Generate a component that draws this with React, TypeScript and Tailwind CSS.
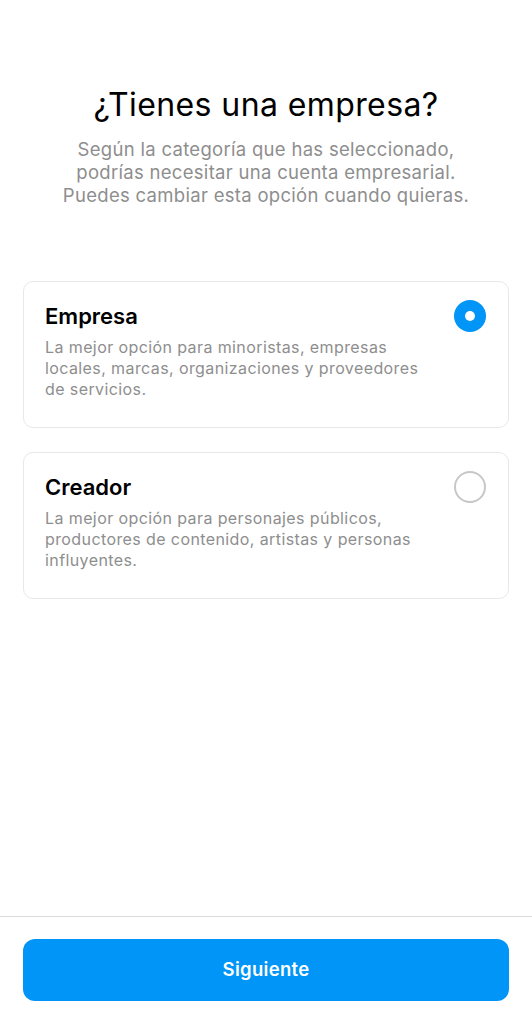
import { useState } from 'react'

interface AccountOption {
    id: string
    title: string
    lines: string[]
}

const options: AccountOption[] = [
    {
        id: 'empresa',
        title: 'Empresa',
        lines: [
            'La mejor opción para minoristas, empresas',
            'locales, marcas, organizaciones y proveedores',
            'de servicios.',
        ],
    },
    {
        id: 'creador',
        title: 'Creador',
        lines: [
            'La mejor opción para personajes públicos,',
            'productores de contenido, artistas y personas',
            'influyentes.',
        ],
    },
]

function Radio({ checked }: { checked: boolean }) {
    if (checked) {
        return (
            <div className="flex h-[32px] w-[32px] items-center justify-center rounded-full bg-[#0095f6]">
                <div className="h-[10px] w-[10px] rounded-full bg-white"></div>
            </div>
        )
    }
    return <div className="h-[32px] w-[32px] rounded-full border-2 border-[#c7c7c7]"></div>
}

function OptionCard({
    option,
    selected,
    onSelect,
}: {
    option: AccountOption
    selected: boolean
    onSelect: () => void
}) {
    return (
        <button
            type="button"
            onClick={onSelect}
            className="flex w-full items-start justify-between rounded-[10px] border border-[#e8e8e8] bg-white pt-[21px] pr-[22px] pb-[27px] pl-[21px] text-left"
        >
            <div>
                <div className="text-[22px] leading-[26px] font-semibold text-[#000]">{option.title}</div>
                <div className="mt-[8px] text-[16px] leading-[21px] tracking-[0.4px] text-[#8e8e8e]">
                    {option.lines.map((line) => (
                        <div key={line}>{line}</div>
                    ))}
                </div>
            </div>
            <div className="-mt-[3px]">
                <Radio checked={selected} />
            </div>
        </button>
    )
}

export default function App() {
    const [selected, setSelected] = useState('empresa')

    return (
        <div
            className="flex h-[1024px] w-full flex-col bg-white"
            style={{ fontFamily: 'Inter, "Liberation Sans", sans-serif' }}
        >
            {/* Content */}
            <div className="flex-1 px-[23px] pt-[86px]">
                <h1 className="text-center text-[32px] leading-[38px] font-normal tracking-[0.4px] text-[#000]">
                    ¿Tienes una empresa?
                </h1>
                <p className="mt-[14px] text-center text-[18.5px] leading-[23px] tracking-[0.3px] text-[#8e8e8e]">
                    Según la categoría que has seleccionado,
                    <br />
                    podrías necesitar una cuenta empresarial.
                    <br />
                    Puedes cambiar esta opción cuando quieras.
                </p>

                <div className="mt-[74px] flex flex-col gap-[24px]">
                    {options.map((option) => (
                        <OptionCard
                            key={option.id}
                            option={option}
                            selected={selected === option.id}
                            onSelect={() => setSelected(option.id)}
                        />
                    ))}
                </div>
            </div>

            {/* Footer */}
            <div className="border-t border-[#dbdbdb] px-[23px] pt-[22px] pb-[23px]">
                <button
                    type="button"
                    className="flex h-[62px] w-full items-center justify-center rounded-[12px] bg-[#0095f6] text-[18.5px] font-semibold tracking-[0.3px] text-white"
                >
                    Siguiente
                </button>
            </div>
        </div>
    )
}
